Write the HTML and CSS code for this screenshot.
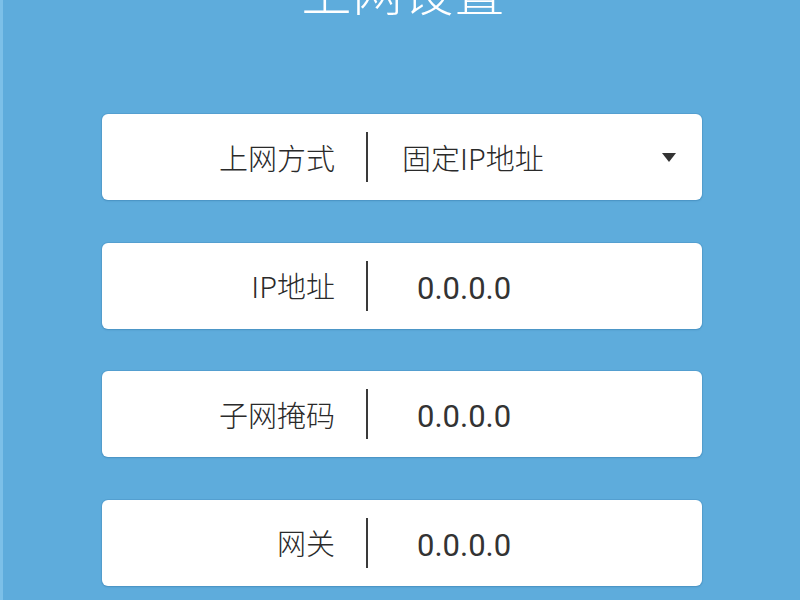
FILE: index.html
```html
<!DOCTYPE html>
<html lang="zh-CN">
<head>
<meta charset="utf-8">
<title>上网设置</title>
<link rel="stylesheet" href="styles.css">
</head>
<body>
<main class="page">
  <h1 class="title">上网设置</h1>
  <ul class="form">
    <li class="field">
      <span class="label">上网方式</span>
      <span class="sep"></span>
      <span class="value">固定IP地址</span>
      <span class="caret"></span>
    </li>
    <li class="field">
      <span class="label">IP地址</span>
      <span class="sep"></span>
      <span class="value value-ip">0.0.0.0</span>
    </li>
    <li class="field">
      <span class="label">子网掩码</span>
      <span class="sep"></span>
      <span class="value value-ip">0.0.0.0</span>
    </li>
    <li class="field">
      <span class="label">网关</span>
      <span class="sep"></span>
      <span class="value value-ip">0.0.0.0</span>
    </li>
  </ul>
</main>
</body>
</html>
```

FILE: styles.css
```css
html, body {
  margin: 0;
  padding: 0;
}

body {
  width: 800px;
  height: 600px;
  overflow: hidden;
  background: #5eacdc;
  font-family: "Noto Sans CJK SC", "Noto Sans", sans-serif;
  color: #2a2a2a;
}

.page {
  display: flex;
  flex-direction: column;
  height: 600px;
  border-left: 3px solid #7cc0e8;
  box-sizing: border-box;
}

.title {
  margin: -36px 0 0;
  padding-left: 4px;
  font-size: 50px;
  line-height: 50px;
  font-weight: 300;
  color: #ffffff;
  text-align: center;
  letter-spacing: 1px;
}

.form {
  list-style: none;
  margin: 100px 0 0 99px;
  padding: 0;
  display: flex;
  flex-direction: column;
  gap: 42.5px;
}

.field {
  display: flex;
  align-items: center;
  width: 600px;
  height: 86px;
  background: #ffffff;
  border-radius: 6px;
  box-shadow: 0 0 0 1px rgba(70, 140, 190, 0.35), 0 1px 2px rgba(0, 60, 110, 0.2);
}

.label {
  width: 233px;
  text-align: right;
  font-size: 29px;
  font-weight: 300;
  line-height: 1;
}

.sep {
  width: 2px;
  height: 50px;
  margin-left: 31px;
  background: #3a3a3a;
}

.value {
  margin-left: 34px;
  font-size: 29px;
  font-weight: 300;
  line-height: 1;
}

.value-ip {
  margin-left: 49px;
  padding-top: 5px;
  font-family: Roboto, "Noto Sans", sans-serif;
  font-size: 31px;
  font-weight: 400;
  color: #333333;
}

.caret {
  margin-left: auto;
  margin-right: 26px;
  width: 0;
  height: 0;
  border-left: 7px solid transparent;
  border-right: 7px solid transparent;
  border-top: 9px solid #333333;
}
```
